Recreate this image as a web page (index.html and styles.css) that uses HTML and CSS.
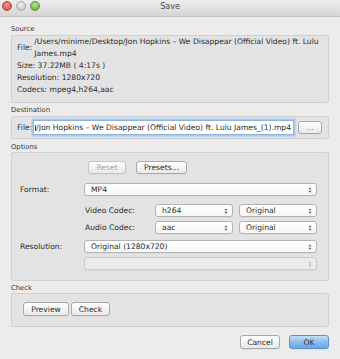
FILE: index.html
```html
<!DOCTYPE html>
<html>
<head>
    <title>Save</title>
    <link rel="stylesheet" href="styles.css">
</head>
<body>
    <div class="window">
        <div class="titlebar">
            <div class="lights">
                <span class="light red"></span>
                <span class="light gray"></span>
                <span class="light green"></span>
            </div>
            <div class="title">Save</div>
            <div></div>
        </div>

        <div class="content">
            <div class="group-label">Source</div>
            <div class="group source">
                <div class="file-row">
                    <span class="file-key">File:</span>
                    <span>/Users/minime/Desktop/Jon Hopkins – We Disappear (Official Video) ft. Lulu James.mp4</span>
                </div>
                <div>Size: 37.22MB ( 4:17s )</div>
                <div>Resolution: 1280x720</div>
                <div>Codecs: mpeg4,h264,aac</div>
            </div>

            <div class="group-label">Destination</div>
            <div class="group destination">
                <span class="dest-key">File:</span>
                <div class="input"><span class="sliver"></span><span>/Jon Hopkins – We Disappear (Official Video) ft. Lulu James_(1).mp4</span><span class="caret"></span></div>
                <button class="btn browse">...</button>
            </div>

            <div class="group-label">Options</div>
            <div class="group options">
                <div class="preset-row">
                    <button class="btn reset" disabled>Reset</button>
                    <button class="btn presets">Presets...</button>
                </div>
                <div class="opt-row format-row">
                    <span>Format:</span>
                    <div class="select">MP4<svg viewBox="0 0 5 8"><polygon points="2.5,0.5 4.5,3 0.5,3"/><polygon points="0.5,5 4.5,5 2.5,7.5"/></svg></div>
                </div>
                <div class="codec-row">
                    <span>Video Codec:</span>
                    <div class="select">h264<svg viewBox="0 0 5 8"><polygon points="2.5,0.5 4.5,3 0.5,3"/><polygon points="0.5,5 4.5,5 2.5,7.5"/></svg></div>
                    <div class="select">Original<svg viewBox="0 0 5 8"><polygon points="2.5,0.5 4.5,3 0.5,3"/><polygon points="0.5,5 4.5,5 2.5,7.5"/></svg></div>
                </div>
                <div class="codec-row">
                    <span>Audio Codec:</span>
                    <div class="select">aac<svg viewBox="0 0 5 8"><polygon points="2.5,0.5 4.5,3 0.5,3"/><polygon points="0.5,5 4.5,5 2.5,7.5"/></svg></div>
                    <div class="select">Original<svg viewBox="0 0 5 8"><polygon points="2.5,0.5 4.5,3 0.5,3"/><polygon points="0.5,5 4.5,5 2.5,7.5"/></svg></div>
                </div>
                <div class="opt-row res-row">
                    <span>Resolution:</span>
                    <div class="select">Original (1280x720)<svg viewBox="0 0 5 8"><polygon points="2.5,0.5 4.5,3 0.5,3"/><polygon points="0.5,5 4.5,5 2.5,7.5"/></svg></div>
                </div>
                <div class="opt-row">
                    <span></span>
                    <div class="select disabled"><svg viewBox="0 0 5 8"><polygon points="2.5,0.5 4.5,3 0.5,3"/><polygon points="0.5,5 4.5,5 2.5,7.5"/></svg></div>
                </div>
            </div>

            <div class="group-label">Check</div>
            <div class="group check">
                <button class="btn preview">Preview</button>
                <button class="btn check-btn">Check</button>
            </div>

            <div class="footer">
                <button class="btn cancel">Cancel</button>
                <button class="btn ok">OK</button>
            </div>
        </div>
    </div>
</body>
</html>
```

FILE: styles.css
```css
body {
    margin: 0;
    background-color: #ececec;
    font-family: "DejaVu Sans", sans-serif;
    font-size: 7.6px;
    color: #2a2a2a;
}

.window {
    height: 359px;
    display: flex;
    flex-direction: column;
}

.titlebar {
    height: 16px;
    display: grid;
    grid-template-columns: 1fr auto 1fr;
    align-items: center;
    background: linear-gradient(#ededed, #d5d5d5);
    border-bottom: 1px solid #c4c4c4;
}

.lights {
    display: flex;
    gap: 4px;
    padding-left: 2px;
    margin-top: -4px;
}

.light {
    width: 8px;
    height: 8px;
    border-radius: 50%;
}

.light.red {
    background: radial-gradient(circle at 50% 35%, #f59a95, #d23f36);
    border: 0.5px solid #b8423a;
}

.light.gray {
    background: radial-gradient(circle at 50% 35%, #f2f2f2, #bdbdbd);
    border: 0.5px solid #a8a8a8;
}

.light.green {
    background: radial-gradient(circle at 50% 35%, #b8e68f, #5ba52f);
    border: 0.5px solid #5c953a;
}

.title {
    font-size: 8px;
    color: #4a4a4a;
    margin-top: -4px;
}

.content {
    padding: 0 11px;
    display: flex;
    flex-direction: column;
}

.group-label {
    font-size: 6.8px;
    line-height: 10px;
    color: #333;
}

.group {
    background-color: #e3e3e3;
    border: 1px solid #d0d0d0;
    border-radius: 2px;
}

/* Source */
.content > .group-label:first-child {
    margin-top: 7px;
}

.source {
    margin-top: 1px;
    padding: 0 5px 6px 5px;
    line-height: 12px;
}

.file-row {
    display: flex;
    align-items: center;
    gap: 2px;
}

.file-key {
    flex: none;
}

/* Destination */
.source + .group-label {
    margin-top: 2px;
}

.destination {
    margin-top: 1px;
    height: 23px;
    box-sizing: border-box;
    display: flex;
    align-items: center;
    padding: 0 6px 0 5px;
}

.dest-key {
    flex: none;
    margin-right: 1px;
}

.input {
    flex: 1;
    min-width: 0;
    height: 13px;
    background: white;
    border: 1px solid #8ab4e3;
    box-shadow: 0 0 0 1.5px #a9c9ee;
    display: flex;
    justify-content: flex-end;
    align-items: center;
    white-space: nowrap;
    margin-right: 4px;
    padding: 0 1px;
}

.sliver {
    width: 2px;
    height: 4px;
    border: 1px solid #444;
    border-left: none;
    border-radius: 0 2px 2px 0;
    margin-right: 0.5px;
    margin-top: 1px;
}

.caret {
    width: 1px;
    height: 10px;
    background: #333;
    margin-left: 1px;
}

/* Buttons */
.btn {
    font-family: inherit;
    font-size: 7.6px;
    color: #2a2a2a;
    height: 14px;
    padding: 0;
    background: linear-gradient(#ffffff, #f1f1f1 60%, #e9e9e9);
    border: 1px solid #a9a9a9;
    border-radius: 3px;
    box-shadow: 0 0.5px 0 rgba(0, 0, 0, 0.08);
}

.browse {
    flex: none;
    width: 24px;
    height: 13px;
    color: #666;
}

/* Options */
.destination + .group-label {
    margin-top: 3px;
}

.options {
    padding: 8px 11px 10px 8px;
    display: flex;
    flex-direction: column;
}

.preset-row {
    display: flex;
    gap: 10px;
    padding-left: 68px;
    margin-bottom: 9px;
}

.reset {
    width: 38px;
    height: 13px;
    color: #a4a4a4;
    border-color: #c4c4c4;
}

.presets {
    width: 51px;
    height: 13px;
}

.opt-row {
    display: grid;
    grid-template-columns: 64px 1fr;
    align-items: center;
    margin-bottom: 4px;
}

.format-row {
    margin-bottom: 8px;
}

.codec-row {
    display: grid;
    grid-template-columns: 64px 1fr 1fr;
    column-gap: 6px;
    align-items: center;
    padding-left: 65px;
    margin-bottom: 4px;
}

.res-row {
    margin-top: 2px;
}

.select {
    height: 13px;
    box-sizing: border-box;
    background: linear-gradient(#ffffff, #f6f6f6);
    border: 1px solid #b3b3b3;
    border-radius: 3px;
    display: flex;
    align-items: center;
    padding: 0 4px 0 6px;
    box-shadow: 0 0.5px 0 rgba(0, 0, 0, 0.06);
}

.select svg {
    width: 4px;
    height: 6px;
    fill: #555;
    margin-left: auto;
}

.select.disabled {
    background: #ececec;
    border-color: #cacaca;
}

.select.disabled svg {
    fill: #b5b5b5;
}

.options .opt-row:last-child {
    margin-bottom: 0;
}

/* Check */
.options + .group-label {
    margin-top: 2px;
}

.check {
    height: 34px;
    box-sizing: border-box;
    display: flex;
    align-items: flex-start;
    gap: 2px;
    padding: 8px 11px 0;
}

.preview {
    width: 46px;
}

.check-btn {
    width: 39px;
}

/* Footer */
.footer {
    display: flex;
    justify-content: flex-end;
    gap: 9px;
    margin-top: 8px;
}

.cancel,
.ok {
    width: 40px;
}

.ok {
    background: linear-gradient(#c6def6, #8dbdee 50%, #6aa7e6);
    border-color: #5d8fcb;
}
```
